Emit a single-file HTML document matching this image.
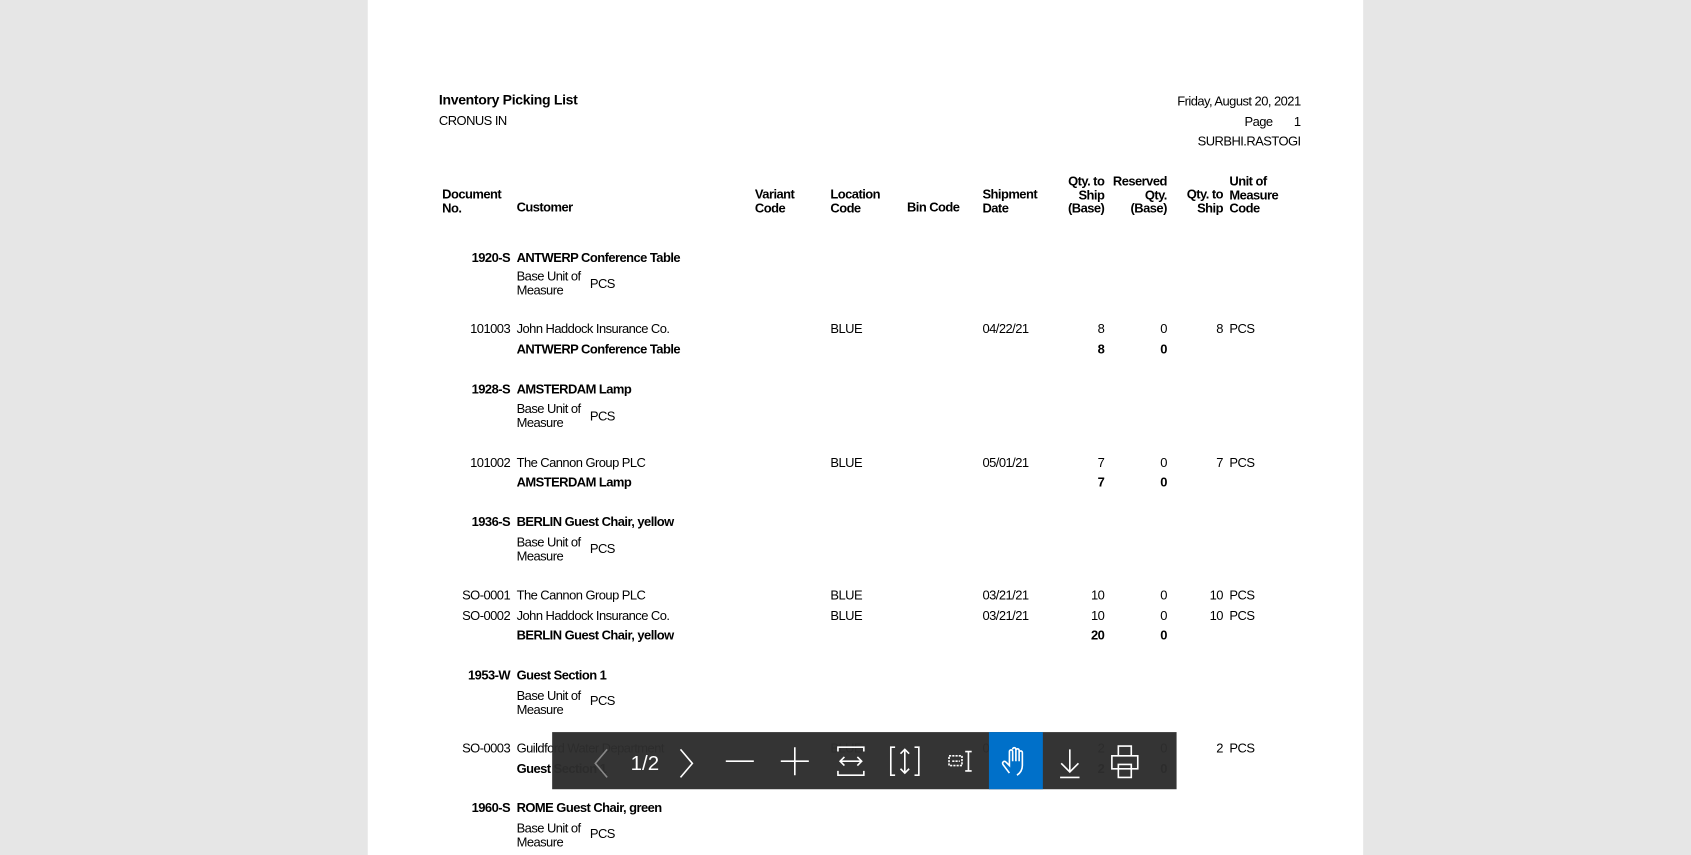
<!DOCTYPE html>
<html><head><meta charset="utf-8"><style>
html,body{margin:0;padding:0;width:1691px;height:855px;overflow:hidden;background:#e6e6e6}
#w{position:absolute;left:0;top:0;width:1568px;height:793px;transform:scale(1.07844,1.0782);transform-origin:0 0;font-family:"Liberation Sans",Arial,sans-serif;font-size:12px;letter-spacing:-0.5px;color:#000}
.pg{position:absolute;left:341px;top:0;width:923px;height:793px;background:#fff}
.t{position:absolute;line-height:12.5px;white-space:nowrap}
.b{font-weight:bold}
.hr{text-align:right}
#tb{position:absolute;left:512px;top:679px;width:579px;height:53px;background:rgba(45,45,45,0.97);letter-spacing:0}
#tb svg{position:absolute;top:0}
</style></head><body><div id="w">
<div class="pg"></div>
<div class="t b" style="left:407px;top:87px;font-size:13px;letter-spacing:-0.3px">Inventory Picking List</div>
<div class="t" style="left:407px;top:106px">CRONUS IN</div>
<div class="t" style="right:362px;top:88px">Friday, August 20, 2021</div>
<div class="t" style="left:1154px;top:107px">Page</div>
<div class="t" style="right:362px;top:107px">1</div>
<div class="t" style="right:362px;top:125px">SURBHI.RASTOGI</div>

<div class="t b" style="left:410px;top:174px">Document<br>No.</div>
<div class="t b" style="left:479px;top:186px">Customer</div>
<div class="t b" style="left:700px;top:174px">Variant<br>Code</div>
<div class="t b" style="left:770px;top:174px">Location<br>Code</div>
<div class="t b" style="left:841px;top:186px">Bin Code</div>
<div class="t b" style="left:911px;top:174px">Shipment<br>Date</div>
<div class="t b hr" style="right:544px;top:162px">Qty. to<br>Ship<br>(Base)</div>
<div class="t b hr" style="right:486px;top:162px">Reserved<br>Qty.<br>(Base)</div>
<div class="t b hr" style="right:434px;top:174px">Qty. to<br>Ship</div>
<div class="t b" style="left:1140px;top:162px">Unit of<br>Measure<br>Code</div>

<div class="t b" style="right:1095px;top:233px">1920-S</div>
<div class="t b" style="left:479px;top:233px">ANTWERP Conference Table</div>
<div class="t" style="left:479px;top:250px">Base Unit of<br>Measure</div>
<div class="t" style="left:547px;top:257px">PCS</div>
<div class="t" style="right:1095px;top:299px">101003</div>
<div class="t" style="left:479px;top:299px">John Haddock Insurance Co.</div>
<div class="t" style="left:770px;top:299px">BLUE</div>
<div class="t" style="left:911px;top:299px">04/22/21</div>
<div class="t" style="right:544px;top:299px">8</div>
<div class="t" style="right:486px;top:299px">0</div>
<div class="t" style="right:434px;top:299px">8</div>
<div class="t" style="left:1140px;top:299px">PCS</div>
<div class="t b" style="left:479px;top:318px">ANTWERP Conference Table</div>
<div class="t b" style="right:544px;top:318px">8</div>
<div class="t b" style="right:486px;top:318px">0</div>

<div class="t b" style="right:1095px;top:355px">1928-S</div>
<div class="t b" style="left:479px;top:355px">AMSTERDAM Lamp</div>
<div class="t" style="left:479px;top:373px">Base Unit of<br>Measure</div>
<div class="t" style="left:547px;top:380px">PCS</div>
<div class="t" style="right:1095px;top:423px">101002</div>
<div class="t" style="left:479px;top:423px">The Cannon Group PLC</div>
<div class="t" style="left:770px;top:423px">BLUE</div>
<div class="t" style="left:911px;top:423px">05/01/21</div>
<div class="t" style="right:544px;top:423px">7</div>
<div class="t" style="right:486px;top:423px">0</div>
<div class="t" style="right:434px;top:423px">7</div>
<div class="t" style="left:1140px;top:423px">PCS</div>
<div class="t b" style="left:479px;top:441px">AMSTERDAM Lamp</div>
<div class="t b" style="right:544px;top:441px">7</div>
<div class="t b" style="right:486px;top:441px">0</div>

<div class="t b" style="right:1095px;top:478px">1936-S</div>
<div class="t b" style="left:479px;top:478px">BERLIN Guest Chair, yellow</div>
<div class="t" style="left:479px;top:497px">Base Unit of<br>Measure</div>
<div class="t" style="left:547px;top:503px">PCS</div>
<div class="t" style="right:1095px;top:546px">SO-0001</div>
<div class="t" style="left:479px;top:546px">The Cannon Group PLC</div>
<div class="t" style="left:770px;top:546px">BLUE</div>
<div class="t" style="left:911px;top:546px">03/21/21</div>
<div class="t" style="right:544px;top:546px">10</div>
<div class="t" style="right:486px;top:546px">0</div>
<div class="t" style="right:434px;top:546px">10</div>
<div class="t" style="left:1140px;top:546px">PCS</div>
<div class="t" style="right:1095px;top:565px">SO-0002</div>
<div class="t" style="left:479px;top:565px">John Haddock Insurance Co.</div>
<div class="t" style="left:770px;top:565px">BLUE</div>
<div class="t" style="left:911px;top:565px">03/21/21</div>
<div class="t" style="right:544px;top:565px">10</div>
<div class="t" style="right:486px;top:565px">0</div>
<div class="t" style="right:434px;top:565px">10</div>
<div class="t" style="left:1140px;top:565px">PCS</div>
<div class="t b" style="left:479px;top:583px">BERLIN Guest Chair, yellow</div>
<div class="t b" style="right:544px;top:583px">20</div>
<div class="t b" style="right:486px;top:583px">0</div>

<div class="t b" style="right:1095px;top:620px">1953-W</div>
<div class="t b" style="left:479px;top:620px">Guest Section 1</div>
<div class="t" style="left:479px;top:639px">Base Unit of<br>Measure</div>
<div class="t" style="left:547px;top:644px">PCS</div>
<div class="t" style="right:1095px;top:688px">SO-0003</div>
<div class="t" style="left:479px;top:688px">Guildford Water Department</div>
<div class="t" style="left:770px;top:688px">BLUE</div>
<div class="t" style="left:911px;top:688px">03/21/21</div>
<div class="t" style="right:544px;top:688px">2</div>
<div class="t" style="right:486px;top:688px">0</div>
<div class="t" style="right:434px;top:688px">2</div>
<div class="t" style="left:1140px;top:688px">PCS</div>
<div class="t b" style="left:479px;top:707px">Guest Section 1</div>
<div class="t b" style="right:544px;top:707px">2</div>
<div class="t b" style="right:486px;top:707px">0</div>

<div class="t b" style="right:1095px;top:743px">1960-S</div>
<div class="t b" style="left:479px;top:743px">ROME Guest Chair, green</div>
<div class="t" style="left:479px;top:762px">Base Unit of<br>Measure</div>
<div class="t" style="left:547px;top:767px">PCS</div>

<div id="tb">
<div style="position:absolute;left:405px;top:0;width:50px;height:53px;background:#0070c9"></div>
<svg width="579" height="53" viewBox="0 0 579 53" fill="none" stroke="#fff" stroke-width="1.5">
<path d="M51 16 L40 29 L51 42" stroke="#888"/>
<text x="86" y="35" fill="#fff" stroke="none" font-family="Liberation Sans, sans-serif" font-size="19" text-anchor="middle">1/2</text>
<path d="M119 16 L130 29 L119 42"/>
<path d="M161 27 H187"/>
<path d="M212 27 H238 M225 14 V40"/>
<path d="M265 18 V14 H289 V18 M265 36 V40 H289 V36 M267 27 H287 M271 23 L267 27 L271 31 M283 23 L287 27 L283 31"/>
<path d="M318 14 H314 V40 H318 M336 14 H340 V40 H336 M327 16 V38 M323 20 L327 16 L331 20 M323 34 L327 38 L331 34"/>
<path d="M368 22 H380 V31 H368 Z M371 27 H378" stroke-dasharray="2 1"/>
<path d="M386 18 V36 M383 18 H389 M383 36 H389"/>
<path d="M424 38 L418 30 C417 28 419 26 421 28 L424 31 V18 C424 16 427 16 427 18 V27 M427 16 C427 14 430 14 430 16 V27 M430 17 C430 15 433 15 433 17 V27 M433 19 C433 17 436 17 436 19 V31 C436 35 434 38 431 40"/>
<path d="M480 16 V37 M472 29 L480 37 L488 29 M471 42 H489"/>
<path d="M525 22 V13 H537 V22 M519 22 H543 V34 H519 Z M525 30 H537 V42 H525 Z"/>
</svg>
</div>
</div></body></html>
